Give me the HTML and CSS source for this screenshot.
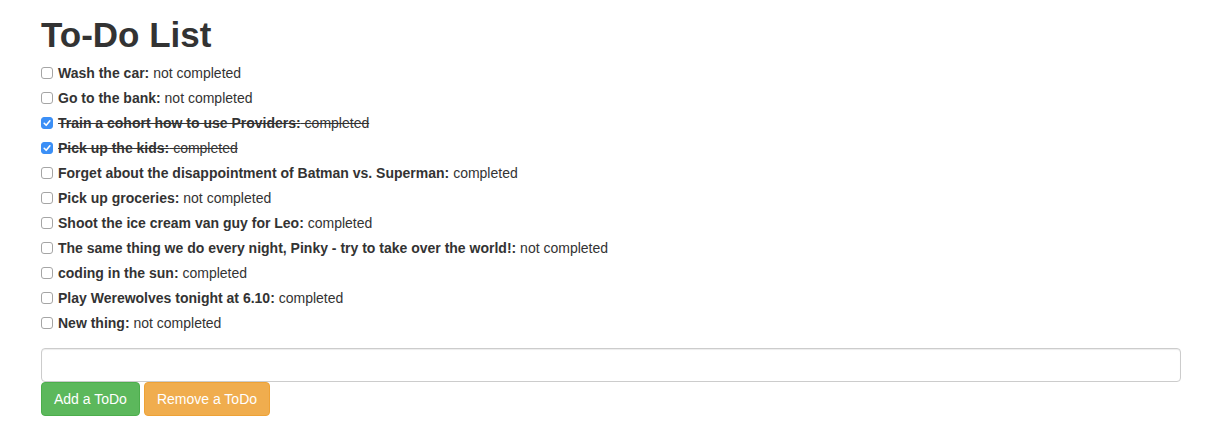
FILE: index.html
```html
<!DOCTYPE html>
<html>
<head>
<meta charset="utf-8">
<link rel="stylesheet" href="styles.css">
</head>
<body>
<div class="container">
  <h1 class="title">To-Do List</h1>
  <ul class="todos">
    <li class="todo"><span class="box"></span><span class="text"><b>Wash the car:</b> not completed</span></li>
    <li class="todo"><span class="box"></span><span class="text"><b>Go to the bank:</b> not completed</span></li>
    <li class="todo done"><span class="box checked"><svg viewBox="0 0 12 12" width="12" height="12"><path d="M3.2 6.3 L5.2 8.3 L8.9 3.8" fill="none" stroke="#fff" stroke-width="1.6" stroke-linecap="round" stroke-linejoin="round"/></svg></span><span class="text"><b>Train a cohort how to use Providers:</b> completed</span></li>
    <li class="todo done"><span class="box checked"><svg viewBox="0 0 12 12" width="12" height="12"><path d="M3.2 6.3 L5.2 8.3 L8.9 3.8" fill="none" stroke="#fff" stroke-width="1.6" stroke-linecap="round" stroke-linejoin="round"/></svg></span><span class="text"><b>Pick up the kids:</b> completed</span></li>
    <li class="todo"><span class="box"></span><span class="text"><b>Forget about the disappointment of Batman vs. Superman:</b> completed</span></li>
    <li class="todo"><span class="box"></span><span class="text"><b>Pick up groceries:</b> not completed</span></li>
    <li class="todo"><span class="box"></span><span class="text"><b>Shoot the ice cream van guy for Leo:</b> completed</span></li>
    <li class="todo"><span class="box"></span><span class="text"><b>The same thing we do every night, Pinky - try to take over the world!:</b> not completed</span></li>
    <li class="todo"><span class="box"></span><span class="text"><b>coding in the sun:</b> completed</span></li>
    <li class="todo"><span class="box"></span><span class="text"><b>Play Werewolves tonight at 6.10:</b> completed</span></li>
    <li class="todo"><span class="box"></span><span class="text"><b>New thing:</b> not completed</span></li>
  </ul>
  <input class="field" type="text">
  <div class="actions">
    <button class="btn btn-add">Add a ToDo</button>
    <button class="btn btn-remove">Remove a ToDo</button>
  </div>
</div>
</body>
</html>
```
FILE: styles.css
```css
html, body {
  margin: 0;
  padding: 0;
  background: #fff;
}
body {
  font-family: "Liberation Sans", Arial, Helvetica, sans-serif;
  font-size: 14px;
  line-height: 20px;
  color: #333;
}
.container {
  width: 1140px;
  margin-left: 41px;
}
.title {
  font-size: 35px;
  font-weight: 700;
  line-height: 40px;
  margin: 15px 0 8px 0;
}
.todos {
  list-style: none;
  margin: 0;
  padding: 0;
  display: flex;
  flex-direction: column;
  gap: 5px;
}
.todo {
  display: flex;
  align-items: center;
  height: 20px;
}
.box {
  width: 10px;
  height: 10px;
  border: 1px solid #a5a5a5;
  border-radius: 3px;
  background: #fff;
  margin-right: 5px;
  flex: none;
  display: flex;
  align-items: center;
  justify-content: center;
  box-sizing: content-box;
}
.box.checked {
  background: #3b8ff6;
  border-color: #3b8ff6;
}
.box svg {
  display: block;
  width: 12px;
  height: 12px;
  flex: none;
}
.done .text {
  text-decoration: line-through;
}
.field {
  display: block;
  box-sizing: border-box;
  width: 100%;
  height: 34px;
  margin: 15px 0 0 0;
  border: 1px solid #ccc;
  border-radius: 4px;
  box-shadow: inset 0 1px 1px rgba(0,0,0,0.075);
  padding: 6px 12px;
  font-family: inherit;
  font-size: 14px;
}
.actions {
  display: flex;
  gap: 4px;
}
.btn {
  height: 34px;
  padding: 6px 12px;
  font-family: inherit;
  font-size: 14px;
  line-height: 20px;
  color: #fff;
  border: 1px solid transparent;
  border-radius: 4px;
  cursor: pointer;
}
.btn-add {
  background: #5cb85c;
  border-color: #4cae4c;
}
.btn-remove {
  background: #f0ad4e;
  border-color: #eea236;
}
```
